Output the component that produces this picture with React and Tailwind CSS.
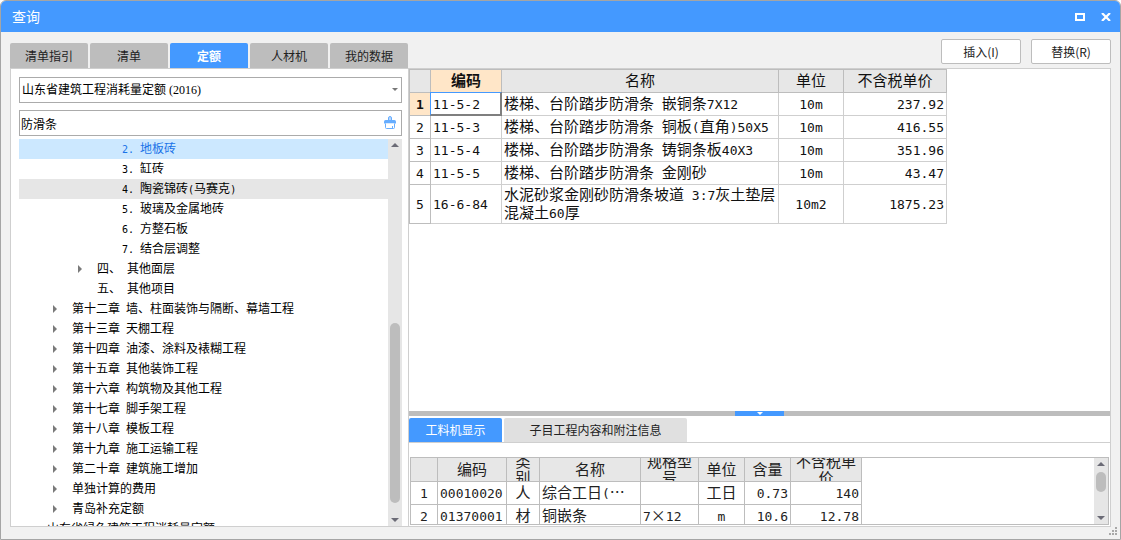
import { clsx } from 'clsx';
import { useState } from 'react';

const LEFT_TABS = ['清单指引', '清单', '定额', '人材机', '我的数据'];

const TREE = [
  { level: 3, label: '2. 地板砖' },
  { level: 3, label: '3. 缸砖' },
  { level: 3, label: '4. 陶瓷锦砖(马赛克)', hover: true },
  { level: 3, label: '5. 玻璃及金属地砖' },
  { level: 3, label: '6. 方整石板' },
  { level: 3, label: '7. 结合层调整' },
  { level: 2, label: '四、 其他面层', arrow: true },
  { level: 2, label: '五、 其他项目' },
  { level: 1, label: '第十二章 墙、柱面装饰与隔断、幕墙工程', arrow: true },
  { level: 1, label: '第十三章 天棚工程', arrow: true },
  { level: 1, label: '第十四章 油漆、涂料及裱糊工程', arrow: true },
  { level: 1, label: '第十五章 其他装饰工程', arrow: true },
  { level: 1, label: '第十六章 构筑物及其他工程', arrow: true },
  { level: 1, label: '第十七章 脚手架工程', arrow: true },
  { level: 1, label: '第十八章 模板工程', arrow: true },
  { level: 1, label: '第十九章 施工运输工程', arrow: true },
  { level: 1, label: '第二十章 建筑施工增加', arrow: true },
  { level: 1, label: '单独计算的费用', arrow: true },
  { level: 1, label: '青岛补充定额', arrow: true },
  { level: 0, label: '山东省绿色建筑工程消耗量定额' },
];

const INDENT = ['pl-[9px]', 'pl-[34px]', 'pl-[59px]', 'pl-[84px]'];

const ITEMS = [
  { code: '11-5-2', name: '楼梯、台阶踏步防滑条 嵌铜条7X12', unit: '10m', price: '237.92' },
  { code: '11-5-3', name: '楼梯、台阶踏步防滑条 铜板(直角)50X5', unit: '10m', price: '416.55' },
  { code: '11-5-4', name: '楼梯、台阶踏步防滑条 铸铜条板40X3', unit: '10m', price: '351.96' },
  { code: '11-5-5', name: '楼梯、台阶踏步防滑条 金刚砂', unit: '10m', price: '43.47' },
  { code: '16-6-84', name: '水泥砂浆金刚砂防滑条坡道 3:7灰土垫层混凝土60厚', unit: '10m2', price: '1875.23' },
];

const RESOURCES = [
  { code: '00010020', kind: '人', name: '综合工日(…', spec: '', unit: '工日', amount: '0.73', price: '140' },
  { code: '01370001', kind: '材', name: '铜嵌条', spec: '7×12', unit: 'm', amount: '10.6', price: '12.78' },
];

// Latin runs are set in a half-width mono face next to the CJK text
const Mixed = ({ text, small }) =>
  text.split(/([\x20-\x7e]+)/).map((part, i) =>
    i % 2 ? (
      <span
        key={i}
        className={clsx(
          "font-['DejaVu_Sans_Mono',monospace] leading-none whitespace-pre-wrap",
          small ? 'text-[10px]' : 'text-[13px]'
        )}
      >
        {part}
      </span>
    ) : (
      part
    )
  );

const Triangle = ({ dir, className }) => (
  <svg viewBox="0 0 8 4" className={clsx('w-2 h-1', className)} fill="currentColor">
    <path d={dir === 'up' ? 'M0 4h8L4 0z' : 'M0 0h8L4 4z'} />
  </svg>
);

const ScrollBar = ({ children }) => (
  <div className="w-[14px] shrink-0 flex flex-col items-center bg-[#e6e6e6] text-[#6b6b76]">
    <button aria-label="向上滚动" className="h-3 shrink-0 flex items-center">
      <Triangle dir="up" />
    </button>
    <div className="flex-1 min-h-0 w-full flex flex-col items-center">{children}</div>
    <button aria-label="向下滚动" className="h-3 shrink-0 flex items-center">
      <Triangle dir="down" />
    </button>
  </div>
);

const TitleBar = () => (
  <header className="h-[31px] shrink-0 flex items-center justify-between pl-[11px] pr-[9px] bg-[#4499ff] text-white">
    <h1 className="text-[14px]">查询</h1>
    <div className="flex items-center gap-4">
      <button aria-label="最大化">
        <svg viewBox="0 0 10 8" className="w-[10px] h-2">
          <path d="M1 1h8v6H1z" fill="none" stroke="currentColor" strokeWidth="2" />
        </svg>
      </button>
      <button aria-label="关闭">
        <svg viewBox="0 0 10 8" className="w-[10px] h-2">
          <path d="M1 0l8 8M9 0L1 8" fill="none" stroke="currentColor" strokeWidth="2.2" />
        </svg>
      </button>
    </div>
  </header>
);

const BrushIcon = () => (
  <svg viewBox="0 0 12 13" className="w-3 h-[13px]" fill="none">
    <path d="M4.500 4V2q0-1.500 1.500-1.500T7.500 2v2" fill="#b5d7ff" stroke="#66adff" />
    <path d="M0 7.500V5.500Q0 4 1.500 4h9Q12 4 12 5.500v2z" fill="#66adff" />
    <path d="M1.500 7.500v4q0 1 1 1h7q1 0 1-1v-4" fill="#fff" stroke="#66adff" />
    <path d="M8.500 12v-2" stroke="#66adff" />
  </svg>
);

const Th = ({ children, className }) => (
  <th className={clsx('p-0 border-r border-b border-[#bdbdbd] bg-[#e7e7e7] font-normal', className)}>{children}</th>
);

const Td = ({ children, className }) => (
  <td className={clsx('border-r border-b px-0.5 pt-0 pb-0.5', className)}>{children}</td>
);

const LeftPane = () => {
  const [tab, setTab] = useState('定额');
  const [selected, setSelected] = useState(0);
  const [keyword, setKeyword] = useState('防滑条');

  return (
    <aside className="w-[398px] shrink-0 flex flex-col pt-[11px]">
      <nav className="flex gap-0.5">
        {LEFT_TABS.map((name) => (
          <button
            key={name}
            onClick={() => setTab(name)}
            className={clsx(
              'flex-1 h-[25px] rounded-t-xs text-[12px]',
              tab === name ? 'bg-[#4499ff] text-white font-bold' : 'bg-[#bdbdbd] text-[#222]'
            )}
          >
            {name}
          </button>
        ))}
      </nav>

      <div className="flex-1 min-h-0 flex flex-col bg-white border-t border-l border-b border-[#cfcfcf] pt-2 pl-2 pr-[6px]">
        <div className="relative shrink-0">
          <select
            aria-label="定额库"
            className="w-full h-[26px] block appearance-none bg-white border border-[#ababab] px-0.5 text-[12px] text-black font-['Liberation_Serif','Noto_Sans_CJK_SC',serif]"
          >
            <option>山东省建筑工程消耗量定额 (2016)</option>
          </select>
          <Triangle dir="down" className="absolute right-1 top-[11px] w-[6px]! h-[3px]! text-[#777] pointer-events-none" />
        </div>

        <div className="relative shrink-0 mt-[7px]">
          <input
            aria-label="查找"
            value={keyword}
            onChange={(e) => setKeyword(e.target.value)}
            className="w-full h-[26px] block bg-white border border-[#ababab] px-px text-[12px] text-black"
          />
          <button aria-label="清除" onClick={() => setKeyword('')} className="absolute right-[6px] top-[6px]">
            <BrushIcon />
          </button>
        </div>

        <div className="flex-1 min-h-0 flex mt-[3px]">
          <ul className="flex-1 overflow-hidden text-[12px] text-black">
            {TREE.map((node, i) => (
              <li
                key={node.label}
                onClick={() => setSelected(i)}
                className={clsx(
                  'h-5 flex items-center whitespace-nowrap',
                  INDENT[node.level],
                  i === selected ? 'bg-[#cce8ff] text-[#1a73e8]' : node.hover && 'bg-[#e6e6e6]'
                )}
              >
                <span className="w-[19px] shrink-0">
                  {node.arrow && (
                    <svg viewBox="0 0 4 8" className="w-1 h-2" fill="#7a7a7a">
                      <path d="M0 0l4 4-4 4z" />
                    </svg>
                  )}
                </span>
                <span className="leading-[18px] pb-0.5">
                  <Mixed text={node.label} small />
                </span>
              </li>
            ))}
          </ul>
          <ScrollBar>
            <div className="basis-[172px] shrink" />
            <div className="w-[10px] h-[180px] shrink-0 rounded-full bg-[#bdbdbd]" />
          </ScrollBar>
        </div>
      </div>
    </aside>
  );
};

const ItemTable = () => (
  <table className="table-fixed w-[538px] border-separate border-spacing-0 border-t border-l border-[#bdbdbd] text-[15px] leading-[18px] text-[#111]">
    <colgroup>
      <col className="w-[21px]" />
      <col className="w-[71px]" />
      <col className="w-[277px]" />
      <col className="w-[65px]" />
      <col className="w-[103px]" />
    </colgroup>
    <thead>
      <tr className="h-[23px]">
        <Th />
        <Th className="bg-[#ffe6c8]! font-bold! pb-0.5!">编码</Th>
        <Th className="pb-0.5!">名称</Th>
        <Th className="pb-0.5!">单位</Th>
        <Th className="pb-0.5!">不含税单价</Th>
      </tr>
    </thead>
    <tbody>
      {ITEMS.map((item, i) => (
        <tr key={item.code} className={i === 4 ? 'h-[39px]' : 'h-[23px]'}>
          <Th className={i === 0 ? 'bg-[#ffe6c8]! font-bold! pb-0.5!' : 'bg-white! pb-0.5!'}>
            <Mixed text={String(i + 1)} />
          </Th>
          <Td className="relative border-[#cfcfcf]">
            {i === 0 && (
              <span className="absolute -inset-px border-t border-l border-r-2 border-b-2 border-t-[#4499ff] border-l-[#4499ff] border-r-[#7f7f7f] border-b-[#7f7f7f]" />
            )}
            <Mixed text={item.code} />
          </Td>
          <Td className="border-[#cfcfcf]">
            <Mixed text={item.name} />
          </Td>
          <Td className="border-[#cfcfcf] text-center">
            <Mixed text={item.unit} />
          </Td>
          <Td className="border-[#cfcfcf] text-right">
            <Mixed text={item.price} />
          </Td>
        </tr>
      ))}
    </tbody>
  </table>
);

const ResourceTable = () => (
  <table className="table-fixed w-[452px] border-separate border-spacing-0 border-l border-[#bdbdbd] text-[15px] leading-[16px] text-[#222]">
    <colgroup>
      <col className="w-[27px]" />
      <col className="w-[69px]" />
      <col className="w-[33px]" />
      <col className="w-[101px]" />
      <col className="w-[58px]" />
      <col className="w-[46px]" />
      <col className="w-[46px]" />
      <col className="w-[71px]" />
    </colgroup>
    <thead>
      <tr>
        {['', '编码', '类别', '名称', '规格型号', '单位', '含量', '不含税单价'].map((name) => (
          <Th key={name}>
            <div className="h-[23px] px-1 pb-0.5 flex items-center justify-center overflow-hidden">{name}</div>
          </Th>
        ))}
      </tr>
    </thead>
    <tbody>
      {RESOURCES.map((row, i) => (
        <tr key={row.code} className="h-[23px]">
          <Td className="border-[#bdbdbd] text-center"><Mixed text={String(i + 1)} /></Td>
          <Td className="border-[#bdbdbd]"><Mixed text={row.code} /></Td>
          <Td className="border-[#bdbdbd] text-center">{row.kind}</Td>
          <Td className="border-[#bdbdbd]"><Mixed text={row.name} /></Td>
          <Td className="border-[#bdbdbd]"><Mixed text={row.spec} /></Td>
          <Td className="border-[#bdbdbd] text-center"><Mixed text={row.unit} /></Td>
          <Td className="border-[#bdbdbd] text-right"><Mixed text={row.amount} /></Td>
          <Td className="border-[#bdbdbd] text-right"><Mixed text={row.price} /></Td>
        </tr>
      ))}
    </tbody>
  </table>
);

const RightPane = () => {
  const [tab, setTab] = useState(0);

  return (
    <main className="flex-1 min-w-0 flex flex-col pt-[7px]">
      <div className="flex justify-end gap-[10px] pb-1">
        {['插入(I)', '替换(R)'].map((label) => (
          <button key={label} className="w-20 h-[25px] bg-white border border-[#bdbdbd] rounded-xs text-[12px] text-[#222]">
            {label}
          </button>
        ))}
      </div>

      <div className="flex-1 min-h-0 flex flex-col bg-white border border-[#cfcfcf]">
        <section className="flex-1 min-h-0 overflow-hidden">
          <ItemTable />
        </section>

        <div className="h-[5px] shrink-0 flex justify-center bg-[#bdbdbd]">
          <button aria-label="收起" className="w-[49px] h-[5px] flex items-center justify-center bg-[#4499ff] text-white">
            <Triangle dir="down" className="w-[6px]! h-[3px]!" />
          </button>
        </div>

        <section className="h-[110px] shrink-0 flex flex-col pt-0.5">
          <nav className="flex gap-0.5 border-b border-[#cfcfcf] text-[12px]">
            {['工料机显示', '子目工程内容和附注信息'].map((name, i) => (
              <button
                key={name}
                onClick={() => setTab(i)}
                className={clsx(
                  'h-6 rounded-t-xs',
                  i === 0 ? 'w-[93px]' : 'w-[183px]',
                  tab === i ? 'bg-[#4499ff] text-white' : 'bg-[#e0e0e0] text-[#222]'
                )}
              >
                {name}
              </button>
            ))}
          </nav>
          <div className="flex-1 min-h-0 flex mt-[14px] mx-px mb-px border-t border-r border-b border-[#bdbdbd]">
            <div className="flex-1 overflow-hidden">
              <ResourceTable />
            </div>
            <ScrollBar>
              <div className="basis-[2px]" />
              <div className="w-[10px] h-5 shrink-0 rounded-full bg-[#bdbdbd]" />
            </ScrollBar>
          </div>
        </section>
      </div>
    </main>
  );
};

const Grip = () => (
  <svg viewBox="0 0 8 8" className="w-2 h-2" fill="#a8a8a8">
    <path d="M6 0h2v2H6zM3 3h2v2H3zM6 3h2v2H6zM0 6h2v2H0zM3 6h2v2H3zM6 6h2v2H6z" />
  </svg>
);

const App = () => (
  <div
    lang="zh-CN"
    className="h-screen flex flex-col overflow-hidden rounded-t-md border border-[#a5a5a5] bg-[#f1f1f1] font-['Noto_Sans_CJK_SC',sans-serif]"
  >
    <TitleBar />
    <div className="flex-1 min-h-0 flex pl-[9px] pr-[9px]">
      <LeftPane />
      <RightPane />
    </div>
    <footer className="h-3 shrink-0 flex justify-end pr-[3px]">
      <Grip />
    </footer>
  </div>
);

export default App;
